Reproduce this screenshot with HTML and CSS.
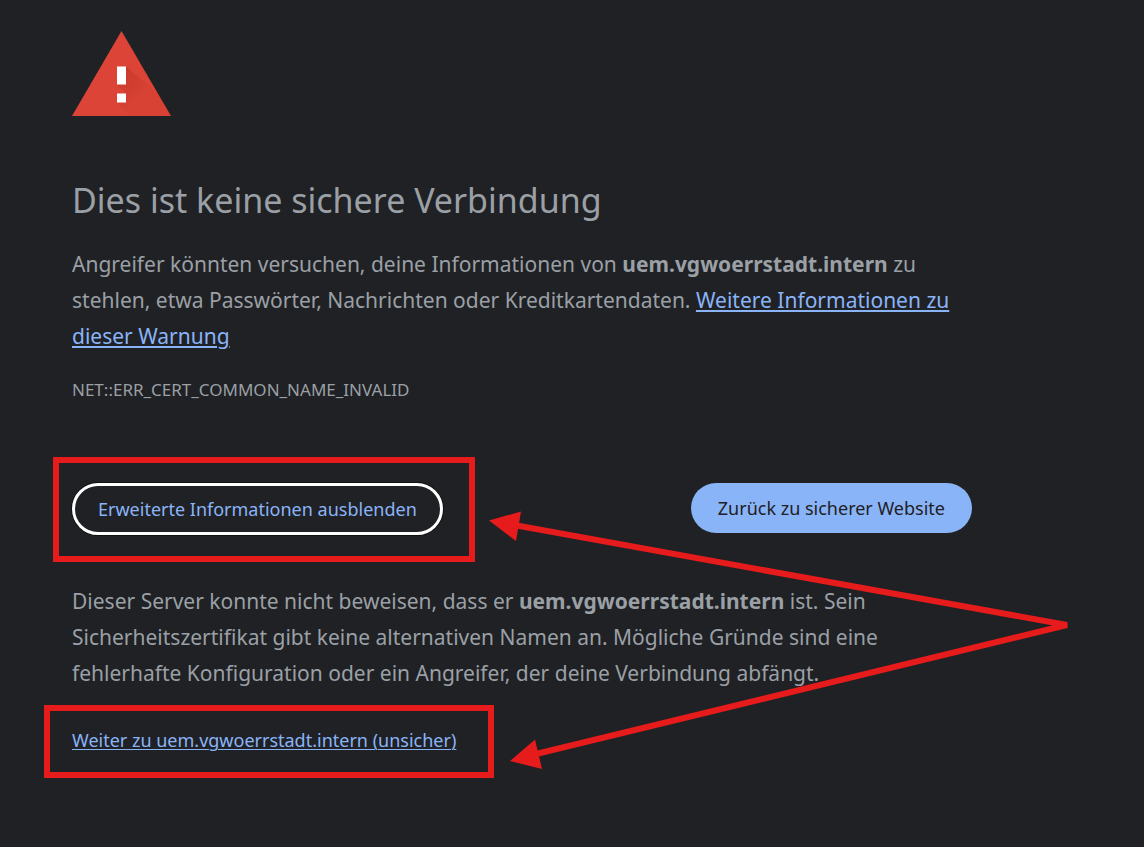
FILE: index.html
```
<!DOCTYPE html>
<html lang="de">
<head>
    <meta charset="utf-8">
    <meta name="viewport" content="width=device-width, initial-scale=1">
    <title>Datenschutzfehler</title>
    <link rel="stylesheet" href="styles.css">
</head>
<body>
    <main class="interstitial">
        <svg class="icon" viewBox="0 0 99 85" aria-hidden="true">
            <defs>
                <linearGradient id="shade" gradientUnits="userSpaceOnUse" x1="46" y1="48" x2="66" y2="68">
                    <stop offset="0" stop-color="#a52714" stop-opacity="0.3"/>
                    <stop offset="1" stop-color="#a52714" stop-opacity="0.08"/>
                </linearGradient>
            </defs>
            <path d="M49.500 0L99 85H0Z" fill="#db4437"/>
            <path d="M54 35.500L85.500 62L99 85H58L45 71.500L54 62.500L45 53.500Z" fill="url(#shade)"/>
            <path d="M45 35.500h9v18h-9zM45 62.500h9v9h-9z" fill="#fff"/>
        </svg>

        <h1>Dies ist keine sichere Verbindung</h1>
        <p>Angreifer könnten versuchen, deine Informationen von <strong>uem.vgwoerrstadt.intern</strong> zu stehlen, etwa Passwörter, Nachrichten oder Kreditkartendaten. <a href="#">Weitere Informationen zu dieser Warnung</a></p>
        <div class="error-code">NET::ERR_CERT_COMMON_NAME_INVALID</div>

        <div class="buttons">
            <div class="mark mark-button">
                <button class="secondary" type="button">Erweiterte Informationen ausblenden</button>
            </div>
            <button class="primary" type="button">Zurück zu sicherer Website</button>
        </div>

        <div class="details">
            <p>Dieser Server konnte nicht beweisen, dass er <strong>uem.vgwoerrstadt.intern</strong> ist. Sein Sicherheitszertifikat gibt keine alternativen Namen an. Mögliche Gründe sind eine fehlerhafte Konfiguration oder ein Angreifer, der deine Verbindung abfängt.</p>
            <div class="mark mark-link">
                <a class="proceed" href="#">Weiter zu uem.vgwoerrstadt.intern (unsicher)</a>
            </div>
        </div>

        <svg class="arrows" width="1144" height="800" viewBox="0 0 1144 800" aria-hidden="true">
            <path d="M514 525L1067 625L536 754" fill="none" stroke="#e61b1b" stroke-width="6" stroke-linejoin="bevel"/>
            <path d="M489 520.500L521 511.500L516 541ZM510 761L535 739.500L542 769Z" fill="#e61b1b"/>
        </svg>
    </main>
</body>
</html>
```
FILE: styles.css
```
body {
    margin: 0;
    background: #202124;
    color: #9aa0a6;
    font-family: "Segoe UI", "Noto Sans", sans-serif;
    font-size: 21px;
    line-height: 36px;
}

.interstitial {
    position: relative;
    max-width: 900px;
    padding: 31px 72px 88px;
}

.icon {
    display: block;
    width: 99px;
    height: 85px;
}

h1 {
    margin: 60px 0 22px;
    font-size: 34px;
    font-weight: 400;
    line-height: 48px;
}

p {
    margin: 0;
}

a {
    color: #8ab4f8;
    text-decoration-thickness: 2px;
    text-underline-offset: 2px;
}

.error-code {
    margin-top: 18px;
    font-size: 17px;
}

.buttons {
    display: flex;
    flex-wrap: wrap;
    justify-content: space-between;
    align-items: flex-start;
    gap: 16px;
    margin-top: 75px;
}

button {
    height: 50px;
    padding: 0 27px;
    border: none;
    border-radius: 26px;
    font-family: inherit;
    font-size: 18px;
    cursor: pointer;
}

.primary {
    background: #8ab4f8;
    color: #202124;
}

.secondary {
    display: block;
    height: 52px;
    padding: 0 23px;
    border: 3px solid #fff;
    box-shadow: 0 0 0 1px #101010;
    background: #202124;
    color: #8ab4f8;
}

.details {
    margin-top: 48px;
}

.proceed {
    font-size: 18px;
    text-decoration-thickness: 1px;
}

/* red highlight frames */
.mark {
    position: relative;
    width: fit-content;
}

.mark::after {
    content: "";
    position: absolute;
    border: 6px solid #e61b1b;
    pointer-events: none;
}

.mark-button::after {
    inset: -26px -32px -27px -19px;
}

.mark-link {
    margin-top: 30px;
}

.mark-link::after {
    inset: -16px -38px -20px -28px;
}

.arrows {
    position: absolute;
    top: 0;
    left: 0;
    pointer-events: none;
}
```
